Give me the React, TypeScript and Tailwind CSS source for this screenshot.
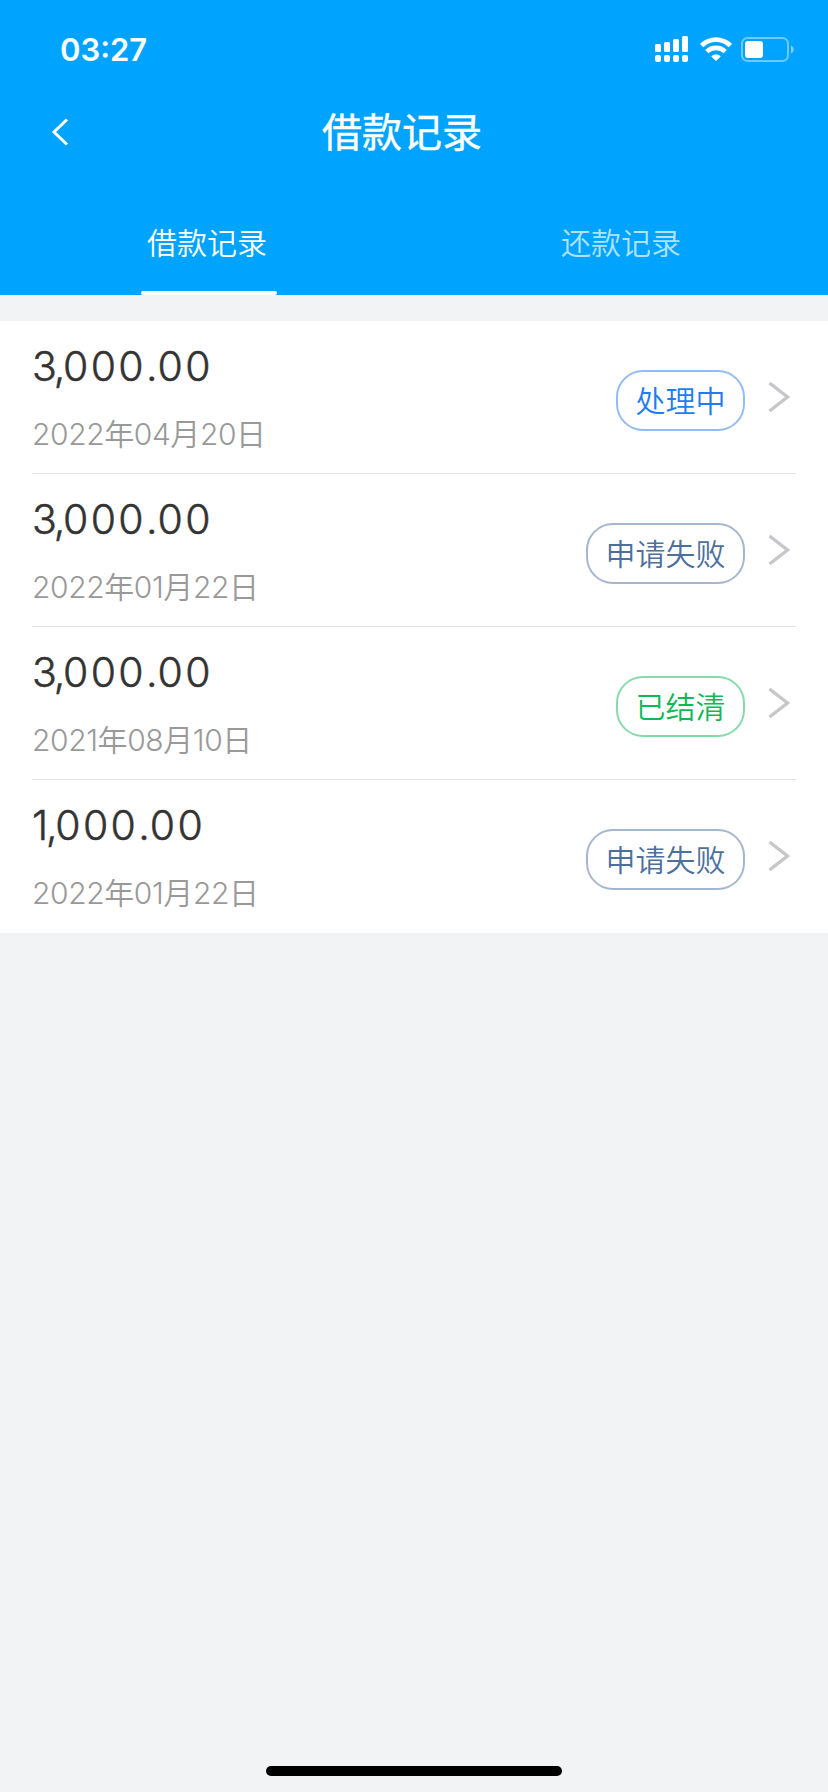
import React, { useState } from 'react'
import clsx from 'clsx'

type Status = 'processing' | 'failed' | 'settled'

interface LoanRecord {
  amount: [string, string, string]
  date: string
  status: Status
}

const tabs = ['借款记录', '还款记录']

// amount is split into thousands, hundreds and cents so each part keeps its own tracking
const records: LoanRecord[] = [
  { amount: ['3', '000', '00'], date: '2022年04月20日', status: 'processing' },
  { amount: ['3', '000', '00'], date: '2022年01月22日', status: 'failed' },
  { amount: ['3', '000', '00'], date: '2021年08月10日', status: 'settled' },
  { amount: ['1', '000', '00'], date: '2022年01月22日', status: 'failed' }
]

const statusLabel: Record<Status, string> = {
  processing: '处理中',
  failed: '申请失败',
  settled: '已结清'
}

const statusStyle: Record<Status, string> = {
  processing: 'border-[#93bcf5] text-[#1f7df0]',
  failed: 'border-[#a6b7cd] text-[#4c6f9c]',
  settled: 'border-[#87dbab] text-[#10b857]'
}

function SignalIcon() {
  return (
    <svg width="34" height="27" viewBox="0 0 34 27" fill="#fff">
      <rect x="0" y="8" width="6" height="8" rx="1.5" />
      <rect x="9" y="6" width="6" height="10" rx="1.5" />
      <rect x="18" y="3" width="6" height="13" rx="1.5" />
      <rect x="27" y="0" width="6" height="16" rx="1.5" />
      <rect x="0" y="19" width="6" height="7" rx="2" />
      <rect x="9" y="19" width="6" height="7" rx="2" />
      <rect x="18" y="19" width="6" height="7" rx="2" />
      <rect x="27" y="19" width="6" height="7" rx="2" />
    </svg>
  )
}

function WifiIcon() {
  return (
    <svg width="32" height="25" viewBox="0 0 32 25" fill="none" stroke="#fff">
      <path d="M1.6 8.6C9.8 0.6 22.2 0.6 30.4 8.6" strokeWidth="4.8" />
      <path d="M6.8 14.6C12 9.6 20 9.6 25.2 14.6" strokeWidth="4.6" />
      <path d="M16 24L11.2 19.4C14 17 18 17 20.8 19.4Z" fill="#fff" stroke="none" />
    </svg>
  )
}

function BatteryIcon() {
  return (
    <svg width="54" height="25" viewBox="0 0 54 25" fill="none">
      <rect x="1" y="1" width="46" height="23" rx="5.5" stroke="#fff" strokeOpacity="0.42" strokeWidth="2" />
      <path d="M50 8.5C53.5 10 53.5 15 50 16.5Z" fill="#fff" fillOpacity="0.5" />
      <rect x="4" y="4" width="18" height="17" rx="3" fill="#fff" />
    </svg>
  )
}

function StatusBar() {
  return (
    <div className="flex h-[99px] items-center justify-between pr-[33px] pl-[60px] text-white">
      <span className="font-[Inter] text-[31px] leading-none font-semibold">03:27</span>
      <div className="flex items-center gap-[11px]">
        <SignalIcon />
        <WifiIcon />
        <div className="-ml-0.5">
          <BatteryIcon />
        </div>
      </div>
    </div>
  )
}

function NavBar() {
  return (
    <div className="flex h-[66px] items-center pl-[51px]">
      <button className="w-[271px]" aria-label="返回">
        <svg width="18" height="28" viewBox="0 0 18 28" fill="none" stroke="#fff" strokeWidth="3">
          <path d="M16 1.5L3 14L16 26.5" />
        </svg>
      </button>
      <h1 className="mt-0.5 text-[40px] leading-none font-normal text-white [-webkit-text-stroke:0.4px_white]">
        借款记录
      </h1>
    </div>
  )
}

function RecordRow({ record, last }: { record: LoanRecord; last: boolean }) {
  const [thousands, hundreds, cents] = record.amount
  return (
    <li className={clsx('flex h-[153px] justify-between', !last && 'border-b border-[#e2e2e4]')}>
      <div className="flex flex-col">
        <p className="mt-[19px] flex h-[52px] items-center font-[Inter] text-[41px] leading-none font-light text-[#333] [-webkit-text-stroke:0.5px_#333]">
          <span className="-tracking-[2.2px]">{thousands},</span>
          <span className="tracking-[2.3px]">{hundreds}</span>
          <span>.</span>
          <span className="tracking-[2.3px]">{cents}</span>
        </p>
        <p className="mt-[23px] flex h-[38px] items-center text-[30px] leading-none font-[350] tracking-[-0.4px] text-[#999]">
          {record.date}
        </p>
      </div>
      <div className="flex items-start">
        <span
          className={clsx(
            'mt-[49px] flex h-[61px] items-center rounded-[27px] border-2 px-[17.5px] text-[30px] leading-none font-[350]',
            statusStyle[record.status]
          )}
        >
          {statusLabel[record.status]}
        </span>
        <svg
          className="mt-[60px] mr-[5px] ml-[23px]"
          width="23"
          height="32"
          viewBox="0 0 23 32"
          fill="none"
          stroke="#c7c7cb"
          strokeWidth="3.4"
        >
          <path d="M1.5 2L19.5 16L1.5 30" />
        </svg>
      </div>
    </li>
  )
}

export default function App() {
  const [activeTab, setActiveTab] = useState(0)

  return (
    <div className="flex h-[1792px] w-[828px] flex-col bg-[#f1f3f5] font-[Inter,'Noto_Sans_CJK_SC',sans-serif]">
      <header className="flex h-[295px] flex-col bg-[#00a4ff]">
        <StatusBar />
        <NavBar />
        <nav className="flex flex-1">
          {tabs.map((tab, i) => (
            <button
              key={tab}
              className={clsx(
                'flex flex-1 flex-col items-center justify-end text-[30px] leading-none font-[350]',
                i === activeTab ? 'text-white' : 'text-white/70'
              )}
              onClick={() => setActiveTab(i)}
            >
              <span className="mb-[33px]">{tab}</span>
              <span className={clsx('ml-[3px] h-1 w-[136px] rounded-sm', i === activeTab && 'bg-white')} />
            </button>
          ))}
        </nav>
      </header>

      <ul className="mt-[26px] bg-white px-8">
        {records.map((record, i) => (
          <RecordRow key={i} record={record} last={i === records.length - 1} />
        ))}
      </ul>

      <div className="mt-auto mb-4 ml-[266px] h-[10px] w-[296px] rounded-full bg-black" />
    </div>
  )
}
